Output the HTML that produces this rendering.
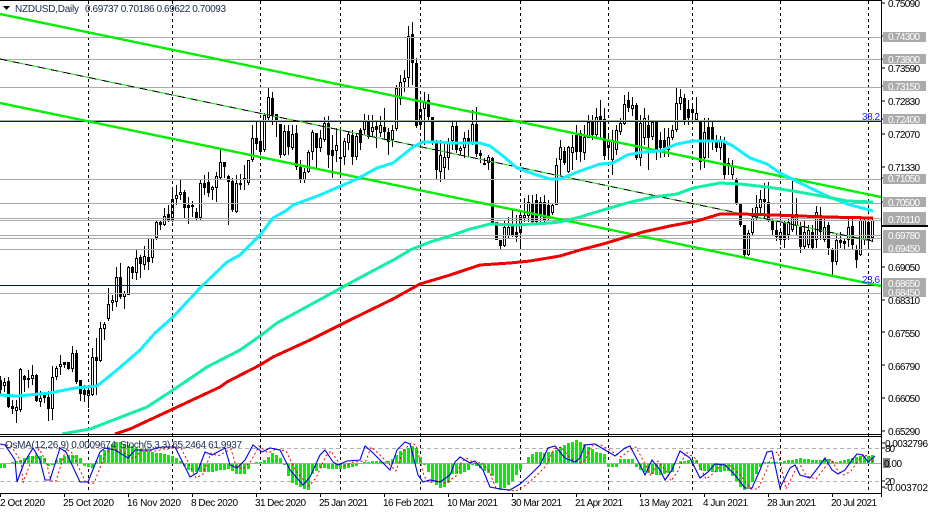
<!DOCTYPE html>
<html><head><meta charset="utf-8"><style>
html,body{margin:0;padding:0;background:#fff;width:928px;height:513px;overflow:hidden}
svg{display:block;position:absolute;left:0;top:0}
text{font-family:"Liberation Sans",sans-serif;font-size:10px;fill:#000}
.w{fill:#fff}.d{fill:#1a2a4a}
</style></head><body>
<svg id="s" width="928" height="513" viewBox="0 0 928 513" xmlns="http://www.w3.org/2000/svg">
<rect width="928" height="513" fill="#fff"/>
<g id="candles" shape-rendering="crispEdges"></g>
<g stroke="#000" stroke-dasharray="3 3" shape-rendering="crispEdges">
<path d="M88.5 1V493M172.5 1V493M260.5 1V493M340.5 1V493M420.5 1V493M520.5 1V493M608.5 1V493M692.5 1V493M780.5 1V493M868.5 1V493"/>
</g>
<g stroke="#aaa" shape-rendering="crispEdges">
<path d="M0 37.5H881M0 59.5H881M0 87.5H881M0 120.5H881M0 179.5H881M0 203.5H881M0 218.5H881M0 220.5H881M0 235.5H881M0 238.5H881M0 249.5H881M0 293.5H881"/>
</g>
<path d="M0 121.5H881M0 285.5H881" stroke="#0000c8" shape-rendering="crispEdges"/>
<g fill="none" shape-rendering="crispEdges">
<path d="M0 14L881 197M0 103L881 286" stroke="#00f000" stroke-width="2.4"/>
<path d="M0 59L872 241" stroke="#20e020" stroke-width="1.1"/>
<path d="M0 59L872 241" stroke="#000" stroke-width="1" stroke-dasharray="7 6"/>
<path d="M0 395L17 396L50 393L75 388L97 386L117 370L140 350L155 333L173 317L200 288L227 262L240 255L260 235L273 218L287 210L293 205L320 195L357 179L377 168L393 163L413 147L423 142L440 142L450 143L480 143L490 146L503 156L517 168L537 175L550 179L560 179L580 171L600 164L613 163L627 155L643 152L660 151L677 144L693 141L723 141L733 146L750 158L767 164L780 173L800 183L827 196L847 204L873 211" stroke="#10f0ff" stroke-width="3" stroke-linejoin="round"/>
<path d="M62 434L90 429L147 407L173 390L207 367L240 350L260 336L277 323L310 305L350 283L397 258L410 250L430 242L450 236L470 229L490 224L517 225L550 223L560 222L580 217L603 210L627 203L653 197L677 194L693 188L720 183L740 184L767 187L793 191L827 197L847 201L873 202" stroke="#12efa8" stroke-width="3"/>
<path d="M115 434L130 429L173 409L220 387L227 382L260 365L273 357L310 340L350 320L393 299L420 284L450 275L480 265L510 263L530 261L560 256L580 250L603 244L623 238L643 232L670 226L697 221L720 214L740 214L773 215L827 217L873 218" stroke="#f00000" stroke-width="3"/>
</g>
<g shape-rendering="crispEdges" stroke="#000" fill="none">
<path d="M0 .5H882M881.500 0V497M0 434.5H882M0 436.5H882M0 493.5H882"/>
<path d="M882 3H885M882 36H885M882 59H885M882 68H885M882 86H885M882 101H885M882 119H885M882 134H885M882 167H885M882 178H885M882 202H885M882 267H885M882 300H885M882 332H885M882 365H885M882 398H885M882 431H885M882 448H885M882 481H885M882 443H885M882 487H885"/>
<path d="M0.5 493V497M64.5 493V497M128.5 493V497M192.5 493V497M256.5 493V497M320.5 493V497M384.5 493V497M448.5 493V497M512.5 493V497M576.5 493V497M640.5 493V497M704.5 493V497M768.5 493V497M832.5 493V497"/>
</g>
<path d="M0 448.5H881M0 481.5H881" stroke="#b0b0b0" stroke-dasharray="4 3" shape-rendering="crispEdges"/>
<path d="M0 463.5H881" stroke="#a8a8a8" shape-rendering="crispEdges"/>
<g id="hist" fill="#00f000" shape-rendering="crispEdges"></g>
<path transform="translate(6,1)" fill="none" stroke="#ee0000" stroke-dasharray="2 2.5" d="M0 444L5 445L15 460L17 482L24 463L33 448L40 460L45 480L50 480L60 448L66 452L80 482L88 482L100 452L105 448L115 450L128 458L135 450L150 450L162 447L175 447L190 477L197 473L205 452L212 455L225 448L230 465L237 468L245 460L253 445L262 452L270 448L280 450L290 470L303 485L310 477L320 455L325 450L333 462L338 465L347 461L360 460L365 446L372 452L385 465L390 470L397 450L405 442L410 444L418 475L423 482L430 480L440 482L450 475L455 462L460 457L470 463L475 461L483 470L490 487L500 489L510 490L520 484L530 475L540 465L548 448L555 446L565 458L575 462L580 458L585 445L595 444L605 450L615 456L625 448L630 446L640 465L645 475L652 460L660 470L665 480L672 470L680 451L690 458L700 478L708 472L715 464L725 465L735 475L745 488L752 488L760 470L767 452L772 451L780 488L790 468L795 465L800 475L810 478L820 465L825 458L832 470L838 474L845 470L852 460L857 454L863 455L868 462"/>
<path fill="none" stroke="#0000e6" stroke-width="1.1" d="M0 444L5 445L15 460L17 482L24 463L33 448L40 460L45 480L50 480L60 448L66 452L80 482L88 482L100 452L105 448L115 450L128 458L135 450L150 450L162 447L175 447L190 477L197 473L205 452L212 455L225 448L230 465L237 468L245 460L253 445L262 452L270 448L280 450L290 470L303 485L310 477L320 455L325 450L333 462L338 465L347 461L360 460L365 446L372 452L385 465L390 470L397 450L405 442L410 444L418 475L423 482L430 480L440 482L450 475L455 462L460 457L470 463L475 461L483 470L490 487L500 489L510 490L520 484L530 475L540 465L548 448L555 446L565 458L575 462L580 458L585 445L595 444L605 450L615 456L625 448L630 446L640 465L645 475L652 460L660 470L665 480L672 470L680 451L690 458L700 478L708 472L715 464L725 465L735 475L745 488L752 488L760 470L767 452L772 451L780 488L790 468L795 465L800 475L810 478L820 465L825 458L832 470L838 474L845 470L852 460L857 454L863 455L868 462L875 456"/>
<path d="M3 6H10L6.500 10Z" fill="#000"/>
<text x="15" y="12" class="d" textLength="64">NZDUSD,Daily</text>
<text x="85" y="12" class="d" textLength="141">0.69737 0.70186 0.69622 0.70093</text>
<text x="5" y="448" class="d" textLength="111">OsMA(12,26,9) 0.0009674</text>
<text x="120" y="448" class="d" textLength="122">Stoch(5,3,3) 65.2464 61.9937</text>
<text x="862" y="120" style="fill:#2020ff" textLength="18">38.2</text>
<text x="862" y="283" style="fill:#2020ff" textLength="18">23.6</text>
<g fill="#aaa" shape-rendering="crispEdges">
<rect x="883" y="32" width="43" height="10"/><rect x="883" y="54" width="43" height="10"/>
<rect x="883" y="81" width="43" height="10"/><rect x="883" y="114" width="43" height="10"/>
<rect x="883" y="174" width="43" height="10"/><rect x="883" y="197" width="43" height="10"/>
<rect x="883" y="212" width="43" height="13"/><rect x="883" y="230" width="43" height="23"/>
<rect x="883" y="278" width="43" height="19"/>
</g>
<rect x="882" y="225" width="46" height="2" fill="#000"/>
<rect x="883" y="458" width="7" height="10" fill="#808080"/>
<g>
<text x="888" y="7" textLength="32">0.75090</text><text x="888" y="72" textLength="32">0.73590</text><text x="888" y="105" textLength="32">0.72830</text>
<text x="888" y="138" textLength="32">0.72070</text><text x="888" y="171" textLength="32">0.71330</text><text x="888" y="271" textLength="32">0.69050</text>
<text x="888" y="304" textLength="32">0.68310</text><text x="888" y="337" textLength="32">0.67550</text><text x="888" y="370" textLength="32">0.66790</text>
<text x="888" y="402" textLength="32">0.66050</text><text x="888" y="435" textLength="32">0.65290</text>
<text class="w" x="888" y="40" textLength="32">0.74300</text><text class="w" x="888" y="63" textLength="32">0.73800</text>
<text class="w" x="888" y="90" textLength="32">0.73150</text><text class="w" x="888" y="123" textLength="32">0.72400</text>
<text class="w" x="888" y="182" textLength="32">0.71050</text><text class="w" x="888" y="206" textLength="32">0.70500</text>
<text class="w" x="888" y="223" textLength="32">0.70110</text><text class="w" x="888" y="239" textLength="32">0.69780</text>
<text class="w" x="888" y="252" textLength="32">0.69450</text><text class="w" x="888" y="287" textLength="32">0.68650</text>
<text class="w" x="888" y="296" textLength="32">0.68450</text>
<text x="885" y="447" textLength="43">0.0032796</text><text x="885" y="452" textLength="10">80</text>
<text x="884" y="467" textLength="18">0.00</text><text x="885" y="485" textLength="10">20</text><text x="884" y="491" textLength="44">-0.003702</text>
</g>
<g>
<text x="0" y="506" textLength="45">2 Oct 2020</text><text x="63" y="506" textLength="51">25 Oct 2020</text><text x="127" y="506" textLength="54">16 Nov 2020</text>
<text x="191" y="506" textLength="47">8 Dec 2020</text><text x="255" y="506" textLength="51">31 Dec 2020</text><text x="319" y="506" textLength="49">25 Jan 2021</text>
<text x="383" y="506" textLength="51">16 Feb 2021</text><text x="447" y="506" textLength="51">10 Mar 2021</text><text x="511" y="506" textLength="51">30 Mar 2021</text>
<text x="575" y="506" textLength="48">21 Apr 2021</text><text x="639" y="506" textLength="54">13 May 2021</text><text x="703" y="506" textLength="45">4 Jun 2021</text>
<text x="767" y="506" textLength="49">28 Jun 2021</text><text x="831" y="506" textLength="46">20 Jul 2021</text>
</g>
</svg>
<script>
(function(){
var NS="http://www.w3.org/2000/svg";
function R(p,x,y,w,h,f){var r=document.createElementNS(NS,"rect");r.setAttribute("x",x);r.setAttribute("y",y);r.setAttribute("width",w);r.setAttribute("height",h);r.setAttribute("fill",f);p.appendChild(r);}
function interp(k,x){for(var i=0;i<k.length-2;i+=2){if(x<=k[i+2]){var t=(x-k[i])/(k[i+2]-k[i]);return k[i+1]+(k[i+3]-k[i+1])*Math.max(0,t);}}return k[k.length-1];}
var D=[
376,380,390,396,0, 378,382,386,392,1, 377,381,407,408,0, 400,406,409,414,0, 400,407,411,423,1,
368,369,410,412,1, 375,376,380,392,0, 370,378,379,388,0, 365,375,379,385,1, 374,375,401,402,0,
391,398,402,407,1, 392,395,398,403,0, 391,397,409,421,0, 366,377,409,420,1, 366,368,377,380,1,
355,364,367,375,1, 362,362,365,368,0, 362,362,369,370,0, 346,353,369,372,1, 350,353,382,384,0,
380,380,394,401,0, 385,390,395,402,0, 388,390,396,408,1, 348,357,395,396,1, 338,357,361,395,0,
322,328,361,362,1, 322,324,329,340,1, 288,304,319,321,1, 295,300,303,311,1, 267,277,302,307,1,
263,277,297,299,0, 291,293,297,309,1, 266,267,295,295,1, 266,267,273,279,0, 250,258,273,280,1,
255,257,264,278,0, 246,256,265,270,1, 238,257,262,270,0, 238,238,258,263,1, 220,222,238,240,1,
220,222,225,230,0, 208,216,225,226,1, 205,214,220,222,0, 188,199,220,222,1, 185,195,199,205,1,
180,192,195,200,1, 190,192,208,218,0, 197,205,208,224,0, 201,205,207,217,0, 208,212,218,220,0,
179,183,218,220,1, 175,183,188,195,0, 172,182,193,197,0, 186,187,190,200,1, 172,176,188,202,1,
150,162,178,180,1, 162,162,167,178,0, 175,176,182,225,0, 178,181,210,212,0, 175,183,212,213,1,
174,183,185,190,0, 165,178,180,190,1, 160,160,183,185,1, 125,138,160,162,1, 122,138,144,150,0,
122,141,152,155,0, 113,115,150,152,1, 88,97,118,120,1, 92,98,115,125,0, 114,114,120,137,0,
124,124,155,158,0, 125,131,155,156,1, 125,131,147,155,0, 125,134,148,150,1, 125,133,167,170,0,
160,167,179,183,0, 168,172,180,183,1, 150,152,172,173,1, 130,132,152,160,1, 133,133,148,168,0,
130,138,148,152,1, 117,123,140,142,1, 116,123,155,168,0, 135,150,156,178,0, 128,145,151,162,1,
130,157,159,178,0, 138,141,157,165,1, 131,134,143,150,1, 130,135,157,165,0, 134,136,157,160,1,
128,130,143,150,0, 114,121,130,135,1, 115,120,137,139,0, 115,127,132,137,1, 120,126,130,148,0,
116,125,133,137,1, 108,127,132,140,0, 128,132,142,155,0, 125,130,140,147,1, 85,88,129,131,1,
75,82,99,105,1, 70,78,82,92,1, 26,36,78,88,1, 22,34,63,85,0, 58,63,126,128,0,
100,109,125,127,1, 92,102,109,145,1, 94,100,117,120,0, 117,117,141,145,0, 140,143,170,180,0,
140,155,172,182,1, 143,157,168,180,1, 138,143,158,170,1, 122,126,141,150,1, 122,126,150,153,0,
146,148,151,155,1, 132,138,148,158,1, 130,138,143,157,0, 110,124,143,145,1, 107,124,154,157,0,
150,153,156,163,0, 158,163,165,165,0, 155,157,163,170,1, 157,158,223,225,0, 222,222,240,240,0,
240,240,246,250,0, 220,227,246,247,1, 217,227,236,238,1, 210,225,236,237,0, 215,232,237,242,0,
212,215,233,250,1, 198,215,218,222,1, 195,202,216,222,1, 195,203,222,224,0, 194,200,222,224,0,
197,202,215,222,0, 195,202,220,222,0, 200,205,218,220,0, 203,205,213,215,1, 158,165,205,205,1,
140,147,160,175,1, 147,151,163,165,0, 146,147,172,173,1, 135,147,153,170,1, 125,135,152,160,0,
130,133,152,162,0, 125,137,153,160,1, 115,122,138,138,1, 115,122,135,140,0, 108,117,135,138,1,
100,116,122,140,0, 108,119,156,160,0, 135,140,148,160,1, 130,140,160,175,1, 125,130,150,155,1,
118,123,132,135,1, 95,104,124,125,1, 92,100,108,112,0, 97,105,109,116,1, 103,105,158,160,0,
115,123,158,166,1, 108,118,138,145,1, 115,125,138,170,0, 120,122,137,140,1, 122,122,150,160,0,
132,140,148,158,0, 128,140,150,157,0, 128,137,150,157,1, 125,130,138,140,1, 88,103,130,132,1,
89,97,104,110,1, 94,98,122,125,0, 100,109,118,125,0, 105,109,113,120,0, 97,113,120,122,1,
120,120,162,170,0, 118,132,158,168,1, 118,127,142,158,0, 122,127,140,150,0, 135,140,148,152,0,
136,140,148,160,1, 137,143,175,180,0, 158,163,166,175,0, 160,165,175,180,1, 178,180,203,205,0,
203,203,225,227,0, 225,225,255,258,0, 230,233,255,256,1, 208,218,233,235,1, 195,207,218,220,1,
190,199,208,215,1, 183,199,202,218,0, 182,202,220,222,0, 218,220,230,235,0, 222,230,237,241,0,
228,232,240,245,1, 220,222,240,248,0, 218,222,235,240,1, 180,217,230,232,1, 198,214,226,235,1,
222,227,247,253,0, 220,232,247,250,1, 225,230,245,248,1, 225,232,248,250,0, 206,212,240,248,1,
207,215,232,240,0, 218,227,240,242,1, 222,225,248,255,0, 248,250,262,275,0, 233,240,262,265,1,
232,240,243,248,0, 238,241,244,250,0, 218,227,240,247,1, 218,226,245,250,0, 245,250,260,268,0,
218,220,255,256,1, 217,220,240,245,1, 218,222,240,248,0, 218,220,238,242,1
];
var c=document.getElementById("candles");
for(var i=0;i*5<D.length;i++){
 var x=i*4,hi=D[i*5],t=D[i*5+1],b=D[i*5+2],lo=D[i*5+3],w=D[i*5+4];
 R(c,x,hi,1,Math.max(1,lo-hi),"#000");
 var h=Math.max(2,b-t);
 R(c,x-1,t,3,h,"#000");
 if(w&&h>2){R(c,x,t+1,1,h-2,"#fff");}
}
var H=[0,-4,6,-4,8,0,18,2,25,6,35,8,43,7,47,-2,53,-1,57,4,68,8,78,8,82,1,85,-3,92,-4,97,4,105,14,117,22,128,18,145,12,170,8,178,4,182,0,190,-8,210,-8,230,-5,236,-10,246,-10,250,0,260,1,266,4,272,10,280,5,284,-1,290,-18,305,-25,309,-26,310,-12,315,-8,320,-4,335,-5,345,-5,358,-1,363,1,375,2,385,1,392,4,400,12,412,17,418,14,421,2,427,-5,432,-18,440,-24,447,-22,451,-10,460,-10,467,-7,472,-1,477,-2,492,-12,500,-26,510,-20,517,-10,522,-3,527,5,535,11,545,10,555,12,565,19,577,23,590,15,597,10,604,9,607,-3,618,-3,620,4,633,4,637,-5,650,-10,660,-11,673,-8,677,2,697,3,700,-6,712,-8,723,-8,727,-6,735,-16,743,-27,750,-22,757,-8,762,1,780,1,785,2,800,5,815,3,827,4,833,1,840,2,855,6,873,8];
var g=document.getElementById("hist");
for(var x=0;x<=872;x+=4){
 var v=Math.round(interp(H,x));
 if(v>0)R(g,x-1,463-v,3,v,"#00f000");
 else if(v<0)R(g,x-1,464,3,-v,"#00f000");
}
})();
</script>
</body></html>
